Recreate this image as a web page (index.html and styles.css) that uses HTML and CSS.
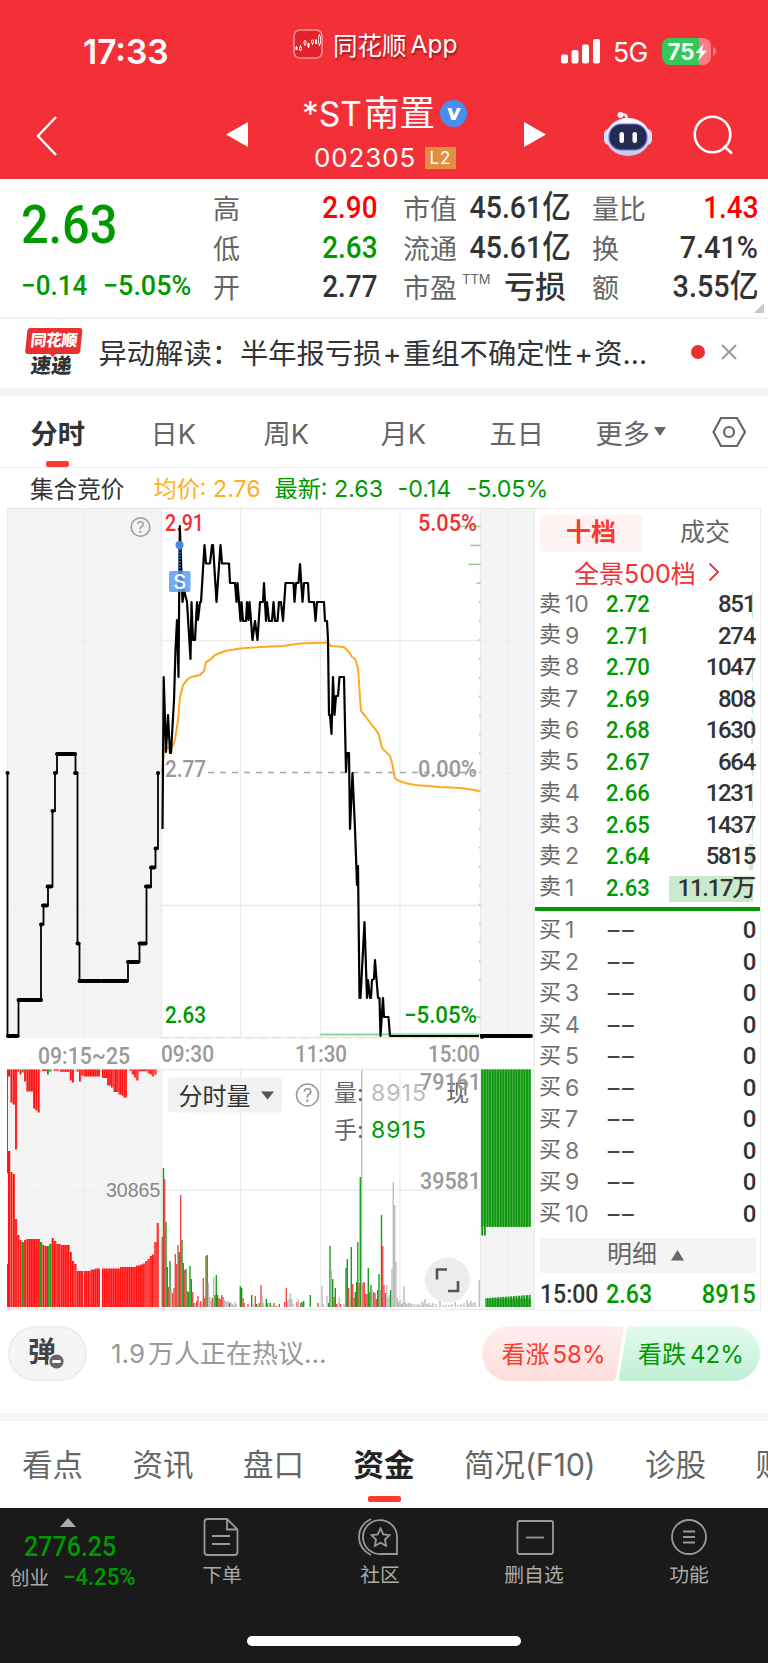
FILE: index.html
```html
<!DOCTYPE html>
<html lang="zh-CN">
<head>
    <meta charset="UTF-8">
    <meta name="viewport" content="width=device-width, initial-scale=1.0">
    <title>*ST南置 002305</title>
    <link rel="stylesheet" href="styles.css">
</head>
<body>
    <header class="header">
        <div class="status-bar">
            <div class="time">17:33</div>
            <div class="app-name">
                <svg width="30" height="30" viewBox="0 0 30 30">
                    <rect x="1" y="1" width="28" height="28" rx="6" fill="#e3222c" stroke="#fa8f8f" stroke-width="1.6"/>
                    <path d="M3.5 17v4M7.5 16v6M12 11v6M15.5 15v4M19.5 11v5M23 10v5M26.500 5v12" stroke="#fff" stroke-width="1"/>
                    <path d="M2.500 18h2v3h-2zM14.500 14h2v4h-2zM22 11h2v4h-2z" fill="#fff"/>
                    <path d="M6.500 18h2v3h-2zM11 12h2v3h-2zM18.500 11h2v3h-2zM25.500 7h2v8h-2z" fill="#e3222c" stroke="#fff" stroke-width=".8"/>
                </svg>
                <span class="app-cn">同花顺</span><span>App</span>
            </div>
            <div class="status-right">
                <svg width="39" height="25" viewBox="0 0 39 25" fill="#fff">
                    <rect x="0" y="15.500" width="7" height="9" rx="2"/>
                    <rect x="10.500" y="11" width="7" height="13.500" rx="2"/>
                    <rect x="21" y="5.500" width="7" height="19" rx="2"/>
                    <rect x="32" y="0" width="7" height="24.500" rx="2"/>
                </svg>
                <span class="net">5G</span>
                <svg width="54" height="27" viewBox="0 0 54 27">
                    <path d="M8 0h29v27H8a8 8 0 0 1-8-8V8a8 8 0 0 1 8-8z" fill="#34c759"/>
                    <path d="M37 0h4a8 8 0 0 1 8 8v11a8 8 0 0 1-8 8h-4z" fill="#fa7c81"/>
                    <path d="M51 9q3 1 3 4.500t-3 4.500z" fill="#fa7c81"/>
                    <text x="5.500" y="22" class="battery-text" textLength="27" lengthAdjust="spacingAndGlyphs">75</text>
                    <path d="M42 5.500L33.500 15h5L36 23l9-10.500h-5z" fill="#fff"/>
                </svg>
            </div>
        </div>
        <div class="nav-bar">
            <svg class="back" width="22" height="40" viewBox="0 0 22 40"><path d="M20 1L2 20l18 19" fill="none" stroke="#fff" stroke-width="2.400"/></svg>
            <svg class="prev" width="22" height="26" viewBox="0 0 22 26"><path d="M22 0v25L0 12.500z" fill="#fff"/></svg>
            <div class="stock">
                <div class="stock-name"><span class="st">*ST</span>南置
                    <svg width="27" height="27" viewBox="0 0 27 27"><circle cx="13.500" cy="13.500" r="13.500" fill="#468ff0"/><path d="M7.500 8h4l2.500 7.500L17 8h4l-5.500 12h-4z" fill="#fff"/></svg>
                </div>
                <div class="stock-code"><span>002305</span><b>L2</b></div>
            </div>
            <svg class="next" width="22" height="26" viewBox="0 0 22 26"><path d="M0 0v25l22-12.500z" fill="#fff"/></svg>
            <svg class="robot" width="50" height="46" viewBox="0 0 50 46">
                <defs><linearGradient id="bot" x1="0" y1="0" x2="0" y2="1"><stop offset="0" stop-color="#fff"/><stop offset="1" stop-color="#c3c8ea"/></linearGradient></defs>
                <path d="M23 8q2-5-5-5" fill="none" stroke="#eef" stroke-width="2.500"/>
                <circle cx="17.500" cy="4" r="3" fill="#f3f3ff"/>
                <rect x="1" y="18" width="10" height="16" rx="5" fill="#d5daf7"/>
                <rect x="39" y="18" width="10" height="16" rx="5" fill="#d5daf7"/>
                <ellipse cx="25" cy="26" rx="22" ry="19" fill="url(#bot)"/>
                <rect x="6" y="13" width="38" height="26" rx="12.500" fill="#222c50" stroke="#7b6bdc" stroke-width="1.200"/>
                <rect x="16.500" y="21" width="4.500" height="11" rx="2.200" fill="#fff"/>
                <rect x="29.500" y="21" width="4.500" height="11" rx="2.200" fill="#fff"/>
            </svg>
            <svg class="search" width="42" height="42" viewBox="0 0 42 42" fill="none" stroke="#fff" stroke-width="2.600"><circle cx="19.500" cy="19.500" r="17.800"/><path d="M31 31l8 7.500"/></svg>
        </div>
    </header>

    <section class="quote">
        <div class="price-col">
            <div class="price din">2.63</div>
            <div class="change"><span class="din">−0.14</span><span class="din">−5.05%</span></div>
        </div>
        <div class="quote-col">
            <div class="item"><label>高</label><b class="din red">2.90</b></div>
            <div class="item"><label>低</label><b class="din green">2.63</b></div>
            <div class="item"><label>开</label><b class="din">2.77</b></div>
        </div>
        <div class="quote-col mid">
            <div class="item"><label>市值</label><b class="din">45.61亿</b></div>
            <div class="item"><label>流通</label><b class="din">45.61亿</b></div>
            <div class="item"><label>市盈<sup>TTM</sup></label><b class="loss">亏损</b></div>
        </div>
        <div class="quote-col end">
            <div class="item"><label>量比</label><b class="din red">1.43</b></div>
            <div class="item"><label>换</label><b class="din">7.41%</b></div>
            <div class="item"><label>额</label><b class="din">3.55亿</b></div>
        </div>
        <i class="corner"></i>
    </section>

    <section class="news">
        <div class="news-logo"><span class="bubble">同花顺</span><span class="express">速递</span></div>
        <div class="news-text">异动解读：半年报亏损<i>+</i>重组不确定性<i>+</i>资<em>...</em></div>
        <span class="dot"></span>
        <svg width="16" height="16" viewBox="0 0 16 16"><path d="M1 1l14 14M15 1L1 15" stroke="#999" stroke-width="2"/></svg>
    </section>

    <nav class="period">
        <div class="p1 active">分时</div>
        <div class="p2">日K</div>
        <div class="p3">周K</div>
        <div class="p4">月K</div>
        <div class="p5">五日</div>
        <div class="p6">更多<svg width="12" height="10" viewBox="0 0 12 10"><path d="M0 0h12L6 9z" fill="#666"/></svg></div>
        <svg class="hex" width="34" height="32" viewBox="0 0 34 32" fill="none" stroke="#666" stroke-width="2.200"><path d="M9 2h16l8 14-8 14H9L1.500 16z"/><circle cx="17" cy="16" r="5"/></svg>
    </nav>

    <div class="legend">
        <span class="l1">集合竞价</span>
        <span class="l2">均价: 2.76</span>
        <span class="l3">最新: 2.63</span>
        <span class="l4">-0.14</span>
        <span class="l5">-5.05%</span>
    </div>

    <main class="board">
        <svg class="chart" width="535" height="805" viewBox="0 507 535 805">
            <!-- auction backgrounds -->
            <rect x="7" y="508" width="154" height="530" fill="#f4f4f4"/>
            <rect x="481" y="508" width="54" height="530" fill="#f4f4f4"/>
            <rect x="7" y="1070" width="154" height="239" fill="#f4f4f4"/>
            <rect x="481" y="1070" width="54" height="239" fill="#f4f4f4"/>
            <g stroke="#ebebeb" stroke-width="1.300" fill="none">
                <path d="M7 508.500H535M161.500 508V1038M240.500 508V1038M320.500 508V1038M400 508V1038M480.500 508V1038M534.500 508V1310"/>
                <path d="M161 640.500H480M161 905.500H480M161 1037.500H480M7.500 508V1038"/>
                <path d="M7 1069.500H535M161.500 1070V1310M240.500 1070V1307M320.500 1070V1307M400 1070V1307M480.500 1070V1307M161 1190H480M7 1309.500H535"/>
            </g>
            <path d="M84.500 508V1038M508.500 508V1038M84.500 1070V1307M508.500 1070V1307M7 641.500H161M7 906.500H161M481 641.500H535M481 906.500H535M7 1191H105M7 774H161M481 774H535" stroke="#e8e8e8" stroke-width="1.200" stroke-dasharray="2 2"/>
            <path d="M161 1038H480" stroke="#f0dcc0" stroke-width="1.200" stroke-dasharray="8 6"/>
            <path d="M208 772.500H475" stroke="#a5a5a5" stroke-width="1.500" stroke-dasharray="6 6"/>

            <g id="chips" stroke="#8fd08f" stroke-width="1.500"></g>
            <path d="M320 1034.500H480" stroke="#8fd893" stroke-width="1.800"/>

            <g class="axis">
                <text x="165" y="531" class="up" textLength="39" lengthAdjust="spacingAndGlyphs">2.91</text>
                <text x="418" y="531" class="up" textLength="59" lengthAdjust="spacingAndGlyphs">5.05%</text>
                <text x="165" y="777" textLength="41" lengthAdjust="spacingAndGlyphs">2.77</text>
                <text x="418" y="777" textLength="59" lengthAdjust="spacingAndGlyphs">0.00%</text>
                <text x="165" y="1023" class="down" textLength="41" lengthAdjust="spacingAndGlyphs">2.63</text>
                <text x="404" y="1023" class="down" textLength="73" lengthAdjust="spacingAndGlyphs">−5.05%</text>
                <text x="38" y="1063.500" textLength="92" lengthAdjust="spacingAndGlyphs">09:15~25</text>
                <text x="161" y="1062" textLength="53" lengthAdjust="spacingAndGlyphs">09:30</text>
                <text x="295" y="1062" textLength="52" lengthAdjust="spacingAndGlyphs">11:30</text>
                <text x="428" y="1062" textLength="52" lengthAdjust="spacingAndGlyphs">15:00</text>
            </g>

            <polyline fill="none" stroke="#ffa826" stroke-width="2" stroke-linejoin="round" points="162,773 164,748 172,748 175,740 178,720 180,697 183,685 188,679 191,677 200,675 204,671 206,662 210,660 215,655 225,651 240,648.500 260,647 283,646 300,643.500 327,642.500 331,646 344,647 349,652 352,657 355,659 358,668 359.500,690 361,711 366,717 371,724 376,730 379,735 382,748 390,756 392,763 395,778 398,780.500 405,783 415,785 440,787 460,788 475,790 479,791.500"/>
            <polyline fill="none" stroke="#000" stroke-width="2.200" stroke-linejoin="round" points="162.500,829 163.700,677 166,752 168,715 170,753 171,753 174,700 175.500,650 177,620 178.500,677 179.800,526 182.500,602 184,590 187,602 190.500,659 191.500,602 193,640 195,640 197,602 198,620 200,602 201,602 204.500,545 206,563.500 210,563.500 212,545 213,545 216.500,602 220.500,545 222,563.500 229,563.500 230,583 235,583 236.500,602 237.500,583 240.500,621 241.500,602 243,621 246,621 247,602 248.500,620 249.500,602 252.500,640 255,621 257.500,640 260,602 263,602 264,583 266,621 267,602 269,621 272,621 273.500,602 275,621 277.500,621 279,602 281,602 283,621 285.500,583 293.500,583 294.500,602 296,583 298.500,583 300,564 302.500,602 304,583 308,583 309,602 314,602 315.500,621 317,602 324,602 325,621 327,621 328,640 329,715 330,715 331.500,734 333,677 334.500,715 336,696 338,696 339.500,677 344,677 346,772 347,753 349,753 350,829 352.500,773 355,829 357,885 358,866 359.500,998 360.500,998 362.500,960 364.500,922 367,998 368,980 370,998 371,998 372,980 374,979 375,960 378,998 379.500,998 380.500,1036 383,998 384,1017 388.500,1017 390,1036 479,1036"/>
            <path d="M7.500 773V1036H18.500V1000H41V924.500H43.500V905.500H48V886.500H52.500V811H55V773H57V754H75.500V773H77.500V943.500H79.500V981H128V962H139.500V943.500H146.500V886.500H151V867.500H155.500V848.500H158V773" fill="none" stroke="#000" stroke-width="1.800"/>
            <path d="M7.500 773h.1M8 1036H17.500M18.500 1000H41M41 924.500h.5M43 905.500H46.500M47.500 886.500H51M52.500 811h.1M55 773h.5M57 754H75M75 773h1.500M77.500 943.500h1M79.500 981H100M102 981H127M128 962H138M139.500 943.500H145.500M146 886.500h4M151 867.500h3M155.500 848.500h.5M158 773h.1M482 1037V1036H531" fill="none" stroke="#000" stroke-width="4" stroke-linecap="round"/>

            <circle cx="179.500" cy="545" r="4" fill="#4387e3"/>
            <path d="M179.500 549V571" stroke="#2768bd" stroke-width="3" stroke-dasharray="1.500 1.500"/>
            <rect x="169" y="571" width="21.500" height="21" rx="2" fill="#5b9df0" opacity=".85"/>
            <text x="179.800" y="588.500" text-anchor="middle" class="mark">S</text>
            <g class="help"><circle cx="140.500" cy="527" r="9.300"/><text x="140.500" y="533" font-size="16">?</text></g>

            <!-- volume -->
            <g id="volume"></g>
            <text x="106" y="1197" class="avg-vol">30865</text>
            <rect x="168" y="1077.500" width="114" height="35" rx="3" fill="#f2f2f2"/>
            <text x="178.500" y="1104.500" class="vol-name" textLength="72">分时量</text>
            <path d="M261 1091.500h13l-6.500 8z" fill="#555"/>
            <g class="help"><circle cx="307.500" cy="1095" r="11"/><text x="307.500" y="1102" font-size="19">?</text></g>
            <g class="vol-value">
                <text x="334" y="1100.500">量:</text>
                <text x="371" y="1100.500" fill="#bbb" textLength="55">8915</text>
                <text x="446" y="1100.500">现</text>
                <text x="334" y="1138">手:</text>
                <text x="371" y="1137.500" class="down" textLength="55">8915</text>
            </g>
            <g class="axis">
                <text x="420" y="1090" textLength="61" lengthAdjust="spacingAndGlyphs">79161</text>
                <text x="420" y="1189" textLength="61" lengthAdjust="spacingAndGlyphs">39581</text>
            </g>
            <circle cx="447.500" cy="1280" r="22.500" fill="#ebebeb" opacity=".95"/>
            <path d="M437 1279.500v-10h10M458 1281v10h-10" fill="none" stroke="#555" stroke-width="2.600"/>
        </svg>

        <aside class="book">
            <div class="book-tabs"><span class="on">十档</span><span>成交</span></div>
            <div class="full-depth">全景500档<svg width="12" height="20" viewBox="0 0 12 20"><path d="M1.500 1.500L10 10l-8.500 8.500" fill="none" stroke="#f03035" stroke-width="1.800"/></svg></div>
            <div id="sell" class="rows"></div>
            <div class="divider"></div>
            <div id="buy" class="rows buy"></div>
            <div class="detail">明细<svg width="13" height="11" viewBox="0 0 13 11"><path d="M0 10.500h13L6.500 0z" fill="#666"/></svg></div>
            <div class="row last"><span class="din tick-time">15:00</span><span class="din tick-price">2.63</span><span class="din tick-qty">8915</span></div>
        </aside>
    </main>

    <section class="talk">
        <div class="danmu">弹<svg width="17" height="17" viewBox="0 0 17 17"><circle cx="8.500" cy="8.500" r="7.800" fill="#666" stroke="#f4f4f4" stroke-width="1.400"/><rect x="4" y="7" width="9" height="3" rx="1.500" fill="#fff"/></svg></div>
        <div class="talk-text">1.9<span>万人正在热议...</span></div>
        <div class="vote">
            <svg width="278" height="55" viewBox="0 0 278 55">
                <defs>
                    <linearGradient id="vr" x1="0" y1="0" x2="0" y2="1"><stop offset="0" stop-color="#ffefee"/><stop offset="1" stop-color="#fddedb"/></linearGradient>
                    <linearGradient id="vg" x1="0" y1="0" x2="0" y2="1"><stop offset="0" stop-color="#e4fbf0"/><stop offset="1" stop-color="#c0efd3"/></linearGradient>
                </defs>
                <path d="M27.500 0H138q4 0 3.500 4L134 51q-.6 4-4 4H27.500a27.500 27.500 0 0 1 0-55z" fill="url(#vr)"/>
                <path d="M250.500 0H149q-3.500 0-4 4L137 51q-.5 4 3.500 4h110a27.500 27.500 0 0 0 0-55z" fill="url(#vg)"/>
                <text x="19.500" y="36.500" fill="#fb3a30">看涨<tspan dx="3">58%</tspan></text>
                <text x="156" y="36.500" fill="#090">看跌<tspan dx="4">42%</tspan></text>
            </svg>
        </div>
    </section>

    <nav class="sections">
        <div>看点</div>
        <div>资讯</div>
        <div>盘口</div>
        <div class="active">资金</div>
        <div>简况<span>(F10)</span></div>
        <div>诊股</div>
        <div>财务</div>
    </nav>

    <footer class="footer">
        <div class="index">
            <i class="tri"></i>
            <div class="index-value din">2776.25</div>
            <div class="index-line"><span>创业</span><b class="din">−4.25%</b></div>
        </div>
        <div class="menu m1">
            <svg width="36" height="38" viewBox="0 0 36 38"><path d="M1.500 4q0-3 3-3H24l10.500 10.500V34q0 3-3 3h-27q-3 0-3-3zM24 1v10.500h10.500M9 18h18M9 26h18"/></svg>
            <span>下单</span>
        </div>
        <div class="menu m2">
            <svg width="42" height="38" viewBox="0 0 42 38"><path d="M14 1Q2 7 2 19t12 18M40 36H24a17 17 0 1 1 16-17zM23.500 10.500l2.800 5.800 6.200.8-4.500 4.400 1 6.300-5.500-3-5.500 3 1-6.300-4.500-4.400 6.200-.8z"/></svg>
            <span>社区</span>
        </div>
        <div class="menu m3">
            <svg width="38" height="38" viewBox="0 0 38 38"><rect x="1.500" y="3" width="35.500" height="33" rx="2"/><path d="M10 19.500h18"/></svg>
            <span>删自选</span>
        </div>
        <div class="menu m4">
            <svg width="38" height="38" viewBox="0 0 38 38"><circle cx="19" cy="19" r="17"/><path d="M13 13.500h12M13 19h12M13 24.500h12"/></svg>
            <span>功能</span>
        </div>
        <div class="home-bar"></div>
    </footer>

    <script src="script.js"></script>
</body>
</html>
```

FILE: styles.css
```css
* {
    box-sizing: border-box;
}
body {
    margin: 0;
    width: 768px;
    height: 1663px;
    overflow: hidden;
    background: #fff;
    color: #333;
    font-family: Inter, "Noto Sans CJK SC", sans-serif;
}
svg {
    display: block;
    flex: none;
}
i, em {
    font-style: normal;
}
.din {
    display: inline-block;
    font-family: Roboto, "Noto Sans CJK SC", sans-serif;
    font-weight: 500;
    white-space: nowrap;
    transform: scaleX(0.87);
    transform-origin: left center;
}
.red {
    color: #f00;
}
.green {
    color: #090;
}

/* header */
.header {
    height: 179px;
    background: #f33038;
    color: #fff;
}
.status-bar {
    height: 90px;
    display: flex;
    align-items: flex-start;
    padding-left: 83px;
}
.time {
    width: 210px;
    margin-top: 32px;
    font-size: 33.500px;
    font-weight: 600;
    line-height: 40px;
}
.app-name {
    display: flex;
    align-items: center;
    width: 268px;
    margin-top: 29px;
    height: 30px;
    font-size: 24.500px;
    text-shadow: 1px 2px 2px rgba(90, 0, 0, 0.6);
}
.app-cn {
    margin: 0 4px 0 10px;
    font-size: 24.500px;
}
.status-right {
    display: flex;
    align-items: center;
    margin-top: 37px;
    height: 28px;
}
.net {
    width: 62px;
    padding-left: 13px;
    margin-top: 2px;
    font-size: 26.500px;
    letter-spacing: -0.5px;
}
.battery-text {
    font: 700 23px Inter, sans-serif;
    fill: #fff;
}
.nav-bar {
    display: flex;
    height: 89px;
    padding-left: 36px;
}
.back {
    margin-top: 26px;
}
.prev {
    margin: 32px 0 0 168px;
}
.stock {
    width: 276px;
    padding-left: 54px;
}
.stock-name {
    display: flex;
    align-items: center;
    height: 48px;
    font-size: 35.500px;
    line-height: 48px;
    white-space: nowrap;
}
.st {
    margin-right: 2px;
    font-size: 33.500px;
}
.stock-name svg {
    margin: 0 0 1px 5px;
}
.stock-code {
    display: flex;
    align-items: center;
    margin: 8px 0 0 12px;
    height: 24px;
    font-size: 26px;
    line-height: 24px;
}
.stock-code span {
    width: 111px;
    letter-spacing: 0.900px;
}
.stock-code b {
    width: 31px;
    height: 22px;
    background: #e08f45;
    font-size: 17px;
    font-weight: 400;
    line-height: 22px;
    text-align: center;
    letter-spacing: 1px;
}
.next {
    margin-top: 32px;
}
.robot {
    margin: 21px 0 0 57px;
}
.search {
    margin: 25px 0 0 40px;
}

/* quote */
.quote {
    position: relative;
    display: grid;
    grid-template-columns: 191px 190px 189px 165px;
    height: 140px;
    padding: 9px 0 0 22px;
    border-bottom: 2px solid #f2f2f2;
}
.price-col {
    color: #090;
}
.price {
    height: 74px;
    margin-left: -1px;
    font-size: 54px;
    line-height: 74px;
    transform: scaleX(0.900);
}
.change {
    display: flex;
    height: 50px;
    margin-left: -1px;
    font-size: 28px;
    line-height: 47px;
}
.change span {
    transform: scaleX(0.930);
}
.change span:first-child {
    width: 82px;
}
.change span:last-child {
    transform: scaleX(0.960);
}
.item {
    display: flex;
    justify-content: space-between;
    align-items: center;
    width: 164px;
    height: 39.600px;
}
.item label {
    font-size: 27px;
    color: #666;
    white-space: nowrap;
}
.item b {
    font-size: 32px;
    line-height: 39px;
    transform-origin: right center;
}
.mid .item {
    width: 162px;
}
.mid .din {
    transform: scaleX(0.890);
}
.end .item {
    width: 166px;
}
.end .item:nth-child(2) .din, .end .item:nth-child(3) .din {
    transform: scaleX(0.900);
}
.item .loss {
    margin-right: -1px;
    font-size: 31px;
    font-weight: 500;
}
.item sup {
    margin-left: 5px;
    font-size: 13px;
    line-height: 1;
    vertical-align: 14px;
}
.corner {
    position: absolute;
    right: 4px;
    bottom: 4px;
    border-left: 10px solid transparent;
    border-bottom: 10px solid #c8c8c8;
}

/* news */
.news {
    display: flex;
    align-items: center;
    height: 77px;
    padding: 0 0 8px 24px;
    border-bottom: 8px solid #f4f4f4;
}
.news-logo {
    display: flex;
    flex-direction: column;
    align-items: center;
    width: 57px;
    margin-top: 6px;
    font-weight: 900;
    transform: skewX(-6deg);
}
.bubble {
    position: relative;
    width: 55px;
    height: 26px;
    border-radius: 3px;
    background: #ea2f31;
    color: #fff;
    font-size: 16px;
    line-height: 24px;
    text-align: center;
    letter-spacing: -0.500px;
}
.bubble::after {
    content: "";
    position: absolute;
    left: 24px;
    top: 25px;
    border: 4px solid transparent;
    border-top-color: #ea2f31;
}
.express {
    font-size: 20.500px;
    line-height: 24px;
}
.news-text {
    width: 592px;
    margin-top: 3px;
    padding-left: 17.500px;
    font-size: 28.300px;
    white-space: nowrap;
}
.news-text i {
    display: inline-block;
    width: 21.500px;
    text-align: center;
}
.dot {
    width: 14px;
    height: 14px;
    margin: 4px 16px 0 18px;
    border-radius: 50%;
    background: #ea2f31;
}
.news > svg {
    margin-top: 4px;
}

/* period tabs */
.period {
    display: grid;
    grid-template-columns: 120px 113px 117px 109px 106px 116px 34px;
    align-items: center;
    height: 72px;
    padding-left: 30.500px;
    border-bottom: 1px solid #ececec;
    color: #666;
    font-size: 27.200px;
}
.period div {
    position: relative;
    display: flex;
    align-items: center;
    height: 71px;
}
.period .active {
    color: #333;
    font-weight: 700;
}
.active::after {
    content: "";
    position: absolute;
    left: 15px;
    bottom: 0;
    width: 23px;
    height: 6px;
    border-radius: 2px;
    background: #fb3a30;
}
.period div svg {
    margin-left: 4px;
}

.legend {
    display: grid;
    grid-template-columns: 123.500px 121px 123px 69px 90px;
    height: 39px;
    padding-left: 30px;
    color: #090;
    font-size: 23.200px;
    line-height: 43px;
    white-space: nowrap;
}
.legend .l1 {
    color: #333;
    font-size: 23.600px;
}
.legend .l2 {
    color: #ffb01f;
}

/* chart */
.board {
    display: flex;
    height: 805px;
}
.axis text {
    font: 500 23.500px Roboto, sans-serif;
    fill: #999;
}
.axis .up {
    fill: #f03035;
}
.axis .down, .down {
    fill: #090;
}
.mark {
    font: 500 20px Inter, sans-serif;
    fill: #fff;
}
.help circle {
    fill: none;
    stroke: #999;
    stroke-width: 1.500;
}
.help text {
    font-family: Inter, sans-serif;
    fill: #999;
    text-anchor: middle;
}
.avg-vol {
    font: 19.500px "Liberation Sans", sans-serif;
    fill: #888;
}
.vol-name {
    font: 24px "Noto Sans CJK SC", sans-serif;
    fill: #333;
}
.vol-value text {
    font-size: 23px;
}
.vol-value text:not([fill]):not(.down) {
    fill: #666;
}

/* order book */
.book {
    width: 226px;
    height: 803px;
    padding: 6px 4px 0 5px;
    margin-top: 1px;
    border: solid #ececec;
    border-width: 1px 1px 1px 0;
}
.book-tabs {
    display: flex;
    height: 37px;
    font-size: 25px;
    line-height: 35px;
    text-align: center;
    color: #666;
}
.book-tabs span {
    flex: none;
    width: 102px;
    margin-right: 12px;
    border-radius: 4px;
}
.book-tabs span:last-child {
    margin: 0;
}
.book-tabs .on {
    background: #fff2f2;
    color: #fb3a30;
    font-weight: 700;
}
.full-depth {
    display: flex;
    align-items: center;
    height: 37px;
    padding: 2px 0 0 34px;
    color: #f03035;
    font-size: 25px;
}
.full-depth svg {
    margin-left: 12px;
}
.row {
    display: flex;
    align-items: center;
    height: 31.500px;
    font-size: 24px;
    line-height: 31px;
    color: #333;
}
.rows {
    height: 315px;
}
.side {
    width: 26px;
    margin: -3px 0 0 -1px;
    font-size: 22px;
    color: #666;
}
.level {
    width: 41px;
    font-size: 23px;
    color: #777;
}
.row .price-cell {
    width: 50px;
    color: #090;
    transform: scaleX(0.920);
}
.buy .price-cell {
    color: #444;
    width: 50px;
    font-size: 22px;
    letter-spacing: -0.500px;
    transform: scaleX(2.050);
}
.row .qty {
    flex: 1;
    margin-right: 1px;
    text-align: right;
    letter-spacing: -1.300px;
    font-family: Roboto, "Noto Sans CJK SC", sans-serif;
    font-weight: 500;
    background: linear-gradient(#c9ebcb, #c9ebcb) no-repeat;
    background-position: right 2px top 3px;
    background-size: 0 26px;
}
.divider {
    height: 4px;
    margin: 3px -4px 0 -5px;
    background: #090;
}
.buy {
    margin-top: 4px;
}
.detail {
    display: flex;
    align-items: center;
    gap: 14px;
    height: 35px;
    margin-top: 8px;
    padding: 0 0 2px 67px;
    background: #f4f4f4;
    font-size: 25px;
    line-height: 33px;
    color: #666;
}
.detail svg {
    margin-top: 2px;
}
.last {
    height: 43px;
    font-size: 25px;
    line-height: 43px;
}
.tick-time {
    width: 66px;
    transform: scaleX(0.920);
}
.last .tick-price, .last .tick-qty {
    color: #090;
}
.last .tick-price {
    transform: scaleX(0.930);
}
.last .tick-qty {
    margin-left: auto;
    transform: scaleX(0.950);
    transform-origin: right center;
}

/* discussion */
.talk {
    display: flex;
    height: 109px;
    padding: 14px 0 0 8px;
    border-bottom: 8px solid #f4f4f4;
}
.danmu {
    position: relative;
    width: 79px;
    height: 55px;
    padding-left: 18px;
    border: 2px solid #ececec;
    border-radius: 28px;
    background: #f5f5f5;
    color: #444;
    font-size: 28px;
    font-weight: 700;
    line-height: 49px;
}
.danmu svg {
    position: absolute;
    left: 38px;
    top: 25px;
}
.talk-text {
    width: 371px;
    padding-left: 24px;
    color: #999;
    font-size: 26px;
    line-height: 56px;
}
.talk-text span {
    margin-left: 3px;
}
.vote {
    margin-left: 24px;
}
.vote text {
    font-size: 24px;
}

.sections {
    display: flex;
    height: 87px;
    padding-left: 22px;
    overflow: hidden;
    color: #666;
    font-size: 30.500px;
    line-height: 88px;
    white-space: nowrap;
}
.sections div {
    position: relative;
    flex: none;
    margin-right: 49.500px;
}
.sections span {
    letter-spacing: -0.300px;
}
.sections .active {
    color: #222;
    font-weight: 700;
}
.sections .active::after {
    left: 14px;
    bottom: 6px;
    width: 33px;
}

/* footer */
.footer {
    position: relative;
    display: flex;
    height: 155px;
    background: #1a1a1a;
    color: #aaa;
}
.index {
    width: 148px;
    padding: 10px 0 0 10px;
}
.tri {
    display: block;
    width: 0;
    margin-left: 50px;
    border: solid transparent;
    border-width: 0 8.500px 9.500px;
    border-bottom-color: #aaa;
}
.index-value {
    margin: 2px 0 0 14px;
    height: 36px;
    font-size: 27.500px;
    line-height: 36px;
    color: #090;
    transform: scaleX(0.910);
}
.index-line {
    display: flex;
    font-size: 19.500px;
    line-height: 26px;
}
.index-line b {
    margin-left: 14px;
    font-size: 23px;
    color: #090;
    line-height: 26px;
    transform: scaleX(0.960);
}
.menu {
    display: flex;
    flex-direction: column;
    align-items: center;
    width: 100px;
    padding-top: 10px;
    font-size: 19.800px;
}
.menu svg {
    fill: none;
    stroke: #999;
    stroke-width: 1.800;
}
.menu span {
    margin-top: 5px;
    line-height: 28px;
}
.m1 {
    margin-left: 24px;
}
.m1 svg {
    margin-right: 3px;
}
.m2 {
    margin-left: 58px;
}
.m2 svg {
    margin-right: 5px;
}
.m3 {
    margin-left: 54px;
}
.m3 svg {
    margin-left: 2px;
}
.m4 {
    margin-left: 55px;
}
.home-bar {
    position: absolute;
    left: 247px;
    bottom: 17px;
    width: 274px;
    height: 10px;
    border-radius: 5px;
    background: #fff;
}
```

FILE: script.js
```js
const RED = '#ff1414';
const GREEN = '#0f990f';
const COLORS = { r: '#f04a4a', g: '#1a9c1a', s: '#bdbdbd', R: RED, G: GREEN };
const BASE = 1307;

function rect(x, y, w, h, fill) {
    return `<rect x="${x}" y="${y}" width="${w}" height="${h}" fill="${fill}"/>`;
}

// order book
const sell = [[2.72, '851', 1], [2.71, '274', 0], [2.70, '1047', 1], [2.69, '808', 1], [2.68, '1630', 2],
    [2.67, '664', 1], [2.66, '1231', 1], [2.65, '1437', 1], [2.64, '5815', 4], [2.63, '11.17万', 84]];
document.getElementById('sell').innerHTML = sell.map((r, i) => `
    <div class="row"><span class="side">卖</span><span class="level">${10 - i}</span>
    <span class="din price-cell">${r[0].toFixed(2)}</span>
    <span class="qty" style="background-size:${r[2]}px 26px">${r[1]}</span></div>`).join('');

let buyRows = '';
for (let i = 1; i <= 10; i++) {
    buyRows += `<div class="row"><span class="side">买</span><span class="level">${i}</span>
        <span class="din price-cell">--</span><span class="qty">0</span></div>`;
}
document.getElementById('buy').innerHTML = buyRows;

// price distribution ticks at the right edge
const chipWidths = { 0: 22, 1: 10, 2: 12, 3: 4 };
let chips = '';
for (let i = 0; i < 25; i++) {
    const y = 526.5 + i * 18.9;
    chips += `<path d="M${480.5 - (chipWidths[i] || 1.5)} ${y}H480.500"/>`;
}
chips += '<path d="M475 1017H480.500"/>';
document.getElementById('chips').innerHTML = chips;

// auction volume: [from x, to x, height, color]
const auction = [
    [7, 8, 43, 'G'], [8, 10.3, 156, 'R'], [10.3, 12.6, 135, 'R'], [12.6, 15, 133, 'R'], [15, 17.200, 88, 'R'],
    [17.2, 19.5, 72, 'R'], [19.5, 21.7, 67, 'R'], [21.7, 24, 65, 'G'], [24, 26.3, 67, 'R'], [26.3, 40, 68, 'R'],
    [40, 42.3, 65, 'G'], [42.3, 44.6, 62, 'R'], [44.6, 47, 61, 'R'], [47, 49.2, 61, 'G'], [49.2, 51.6, 63, 'G'],
    [51.6, 54, 69, 'R'], [54, 56.3, 66, 'R'], [56.3, 60.7, 63, 'R'], [60.7, 69.7, 62, 'R'], [69.7, 72, 55, 'R'],
    [72, 74.3, 46, 'R'], [74.3, 76.6, 43, 'R'], [76.6, 83.2, 36, 'R'], [83.8, 90.5, 36, 'R'], [90.5, 95, 37.500, 'R'],
    [95, 100, 38.500, 'R'], [102, 120, 38.500, 'R'], [120, 136, 40, 'R'], [136, 140, 41.500, 'R'], [140, 143, 42.500, 'R'],
    [143, 145.2, 43.500, 'R'], [145.2, 147.500, 46, 'R'], [147.500, 149.700, 48, 'R'], [149.700, 152, 51, 'R'],
    [152, 154.3, 52.500, 'R'], [154.300, 156.700, 65, 'R'], [156.700, 158.800, 84, 'R']
];
const hanging = [
    [7, 8, 104, 'G'], [8, 10.3, 7, 'R'], [10.3, 12.6, 33, 'R'], [12.6, 15, 35, 'R'], [15, 17.2, 80, 'R'],
    [17.2, 19.3, 2, 'R'], [19.5, 21.5, 5, 'R'], [21.7, 23.8, 3, 'G'], [24, 26.3, 12, 'R'], [26.3, 33, 22, 'R'],
    [33, 35.2, 39, 'R'], [35.2, 37.5, 41, 'R'], [37.500, 39.800, 43, 'R'], [42, 47, 1.500, 'R'], [47, 49, 5, 'G'],
    [49.200, 51.400, 2, 'G'], [53.500, 59, 1.300, 'R'], [60, 69.500, 2.300, 'R'], [69.700, 72, 11, 'R'],
    [72, 74, 13, 'R'], [76.600, 78.700, 2, 'R'], [79, 81.2, 12, 'R'], [81.200, 83.500, 6, 'R'], [83.500, 100, 7, 'R'],
    [102, 107, 8.500, 'R'], [107, 111, 16, 'R'], [111, 113.500, 18, 'R'], [113.500, 118.500, 22.500, 'R'],
    [118.500, 121, 25, 'R'], [121, 123.300, 26, 'R'], [123.300, 127, 28, 'R'], [129.500, 131.500, 1.500, 'R'],
    [131.700, 134, 5, 'R'], [134, 136.300, 8, 'R'], [136.300, 138.500, 11, 'R'], [138.500, 147.500, 1.700, 'R'],
    [147.700, 149.800, 4, 'R'], [150, 152, 5, 'R'], [152.200, 154.300, 7, 'R'], [154.500, 156.600, 5, 'R']
];
let vol = '';
auction.forEach(([a, b, h, c]) => { vol += rect(a, BASE - h, b - a, h, COLORS[c]); });
hanging.forEach(([a, b, h, c]) => { vol += rect(a, 1069.5, b - a, h, COLORS[c]); });
for (let x = 10.3; x < 158; x += 2.27) {
    vol += `<path d="M${x} 1070V${BASE}" stroke="#f4f4f4" stroke-width=".5" opacity=".45"/>`;
}

// session volume: x height color
const session = `162.3 70 r,163.5 139 g,164.7 128 r,166 85 g,167.3 40 g,168.7 20 r,170 46 g,171.3 17 s,172.7 14 r,
174 19 r,175.3 53 r,176.7 43 r,178 62 r,179.3 55 g,180.7 112 r,182 67 g,183.3 44 g,184.7 37 r,186 38 g,187.3 16 r,
188.7 15 g,190 41 g,191.3 28 g,192.7 15 r,194 4 g,195.3 4 s,196.7 6 r,198 11 r,199.3 4 s,200.7 6 r,202 4 s,
203.3 29 r,204.7 9 r,206 51 r,207.2 52 g,208.5 24 s,209.7 10 s,211 6 s,212.3 9 r,213.7 30 s,215 12 g,216.3 32 g,
217.7 12 g,219 9 r,220.3 8 r,221.7 12 r,223 10 r,224.3 7 s,225.7 6 s,227 5 s,228.3 6 s,229.7 4 g,231 5 s,232.3 3 s,
233.7 2 s,235 5 s,236.3 3 s,240.3 21 g,241.7 19 g,243 9 r,244.3 4 r,248 3 r,251.7 12 g,253 3 s,255.3 11 r,256.7 3 g,
259.3 4 r,261 22 r,262.3 11 s,263.7 4 s,266.3 8 g,267.7 4 r,270.3 4 g,272 2 s,274 4 r,276 1 g,279.3 3 r,284.7 5 r,
286.3 19 r,287.7 6 s,289 8 s,290.3 14 s,291.7 8 s,293 3 s,297 5 r,298.3 8 s,300.7 4 r,302 5 g,303.7 6 g,310.3 12 g,
318 4 r,322 21 s,323.3 3 s,327 11 s,328.7 4 g,330 61 g,331.3 37 s,332.7 28 g,334 10 r,335.3 19 g,336.7 3 r,338 4 s,
339.3 9 s,340.7 3 r,344 3 s,346 39 g,347.3 48 g,348.7 19 r,350 8 s,351.3 60 g,352.7 23 r,354 9 r,355.3 15 g,356.7 25 g,
357.8 65 g,359 24 r,360.3 130 g,361.7 237 s,363 24 r,364.3 25 r,365.7 13 r,367 13 r,368.3 39 g,369.7 15 r,371 22 g,
372.3 17 s,373.7 15 r,375 14 r,376.3 8 r,377.7 17 g,379 33 g,380.3 17 s,381.5 92 g,382.7 61 r,384 22 r,385.3 14 r,
386.7 22 s,388 10 s,389.3 12 s,390.7 17 g,392 38 s,393.3 125 s,394.7 102 s,396 45 s,397.3 9 s,398.7 5 s,400 7 s,
401.3 3 s,402.7 4 s,404 21 s,405.3 5 s,406.7 3 s,408.3 4 s,410 4 s,411.7 3 s,414 3 s,416 2 s,418 3 s,420 2 s,
422 5 s,423.7 4 s,425 8 s,427 3 s,429 4 s,431 2 s,433 4 s,436 3 s,440 8 s,443 2 s,446 2 s,449 2 s,452 3 s,
455.3 5 s,458 2 s,461 3 s,464 4 s,467 7 s,469 4 s,471 6 s,473 4 s,475 5 s,479.3 27 s`;
session.split(',').forEach(item => {
    const [x, h, c] = item.trim().split(' ');
    vol += rect(x - 0.7, BASE - h, 1.4, h, COLORS[c]);
});

// closing auction
vol += rect(481, 1069.5, 50, 157, '#5dbb5d') + rect(485, 1298.5, 46, 8.500, '#5dbb5d');
for (let i = 0; i < 19; i++) {
    const x = 481.3 + i * 2.63;
    vol += rect(x, 1069.5, 1.9, i < 2 ? 166 : 157.5, GREEN);
    if (i > 1) {
        vol += rect(x, 1298.5 - i * 0.2, 1.9, 8.5 + i * 0.2, GREEN);
    }
}
document.getElementById('volume').innerHTML = vol;
```
